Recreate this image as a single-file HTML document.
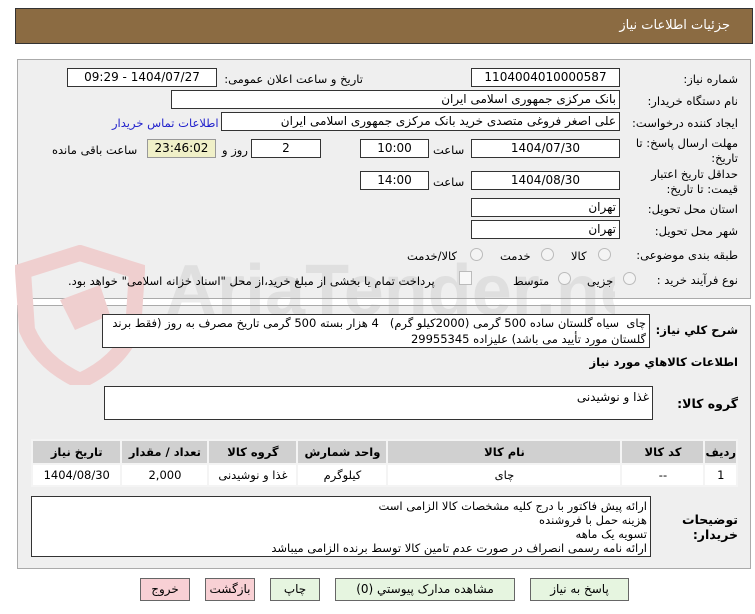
<!DOCTYPE html>
<html><head><meta charset="utf-8"><style>
*{box-sizing:border-box;margin:0;padding:0}
body{width:755px;height:614px;background:#fff;font-family:"DejaVu Sans","Liberation Sans",sans-serif;font-size:11px;color:#000;position:relative;overflow:hidden}
.a{position:absolute}
.hdr{left:15px;top:8px;width:738px;height:36px;background:#8b6b42;border:1px solid #333}
.hdr span{position:absolute;right:22px;top:9px;color:#fff;font-size:13px}
.panel{background:#efefef;border:1px solid #aaa}
.f{position:absolute;background:#fff;border:1px solid #333;height:19px;line-height:17px;font-size:12px;direction:rtl;padding-right:3px;white-space:nowrap;overflow:hidden}
.c{text-align:center;padding:0}
.l{position:absolute;direction:rtl;white-space:nowrap;font-size:11.5px}
.rad{position:absolute;width:13px;height:13px;border-radius:50%;border:1px solid #bbb;background:#f4f4f4}
table{border-collapse:collapse}
td,th{border:2px solid #f4f4f4;text-align:center;font-size:11.5px}
th{background:#d0d0d0;height:24px;font-weight:bold}
td{background:#fff;height:22px}
.b{position:absolute;top:578px;height:23px;border:1px solid #666;font-size:12px;text-align:center;line-height:21px;direction:rtl}
</style></head><body>
<div class="a hdr"><span>جزئیات اطلاعات نیاز</span></div>
<div class="a panel" style="left:17px;top:59px;width:734px;height:240px"></div>
<div class="a panel" style="left:17px;top:305px;width:734px;height:264px"></div>
<!-- watermark -->
<div class="a" style="left:15px;top:245px;width:600px;height:140px;overflow:hidden">
<svg class="a" style="left:0;top:0" width="130" height="140"><path d="M65 8 L122 26 L118 85 Q104 118 65 136 Q26 118 12 85 L8 26 Z" fill="none" stroke="#efcfcf" stroke-width="16"/><path d="M45 55 L85 40 L95 70 L60 85 Z" fill="#efcfcf"/></svg>
<div class="a" style="left:150px;top:5px;font-size:72px;font-weight:bold;color:rgba(170,170,170,0.22);font-family:'Liberation Sans',sans-serif;white-space:nowrap">AriaTender.net</div>
</div>

<div class="l" style="right:17px;top:72px">شماره نیاز:</div>
<div class="f c" style="left:471px;top:68px;width:149px">1104004010000587</div>
<div class="l" style="right:392px;top:72px">تاریخ و ساعت اعلان عمومی:</div>
<div class="f c" style="left:67px;top:68px;width:150px">1404/07/27 - 09:29</div>

<div class="l" style="right:17px;top:94px">نام دستگاه خریدار:</div>
<div class="f" style="left:171px;top:90px;width:449px">بانک مرکزی جمهوری اسلامی ایران</div>

<div class="l" style="right:17px;top:116px">ایجاد کننده درخواست:</div>
<div class="f" style="left:221px;top:112px;width:399px">علی اصغر فروغی متصدی خرید بانک مرکزی جمهوری اسلامی ایران</div>
<div class="l" style="left:112px;top:116px;color:#2222cc">اطلاعات تماس خریدار</div>

<div class="l" style="right:17px;top:136px">مهلت ارسال پاسخ: تا</div>
<div class="l" style="right:17px;top:151px">تاریخ:</div>
<div class="f c" style="left:471px;top:139px;width:149px">1404/07/30</div>
<div class="l" style="left:433px;top:143px">ساعت</div>
<div class="f c" style="left:360px;top:139px;width:69px">10:00</div>
<div class="f c" style="left:251px;top:139px;width:70px">2</div>
<div class="l" style="left:222px;top:143px">روز و</div>
<div class="f c" style="left:147px;top:139px;width:69px;background:#f0f0c8;border-color:#999">23:46:02</div>
<div class="l" style="left:52px;top:143px">ساعت باقی مانده</div>

<div class="l" style="right:17px;top:167px">حداقل تاریخ اعتبار</div>
<div class="l" style="right:17px;top:182px">قیمت: تا تاریخ:</div>
<div class="f c" style="left:471px;top:171px;width:149px">1404/08/30</div>
<div class="l" style="left:433px;top:175px">ساعت</div>
<div class="f c" style="left:360px;top:171px;width:69px">14:00</div>

<div class="l" style="right:17px;top:202px">استان محل تحویل:</div>
<div class="f" style="left:471px;top:198px;width:149px">تهران</div>
<div class="l" style="right:17px;top:224px">شهر محل تحویل:</div>
<div class="f" style="left:471px;top:220px;width:149px">تهران</div>

<div class="l" style="right:17px;top:248px">طبقه بندی موضوعی:</div>
<div class="rad" style="left:598px;top:248px"></div><div class="l" style="left:571px;top:249px">کالا</div>
<div class="rad" style="left:541px;top:248px"></div><div class="l" style="left:500px;top:249px">خدمت</div>
<div class="rad" style="left:470px;top:248px"></div><div class="l" style="left:407px;top:249px">کالا/خدمت</div>

<div class="l" style="right:17px;top:273px">نوع فرآیند خرید :</div>
<div class="rad" style="left:623px;top:272px"></div><div class="l" style="left:587px;top:274px">جزیی</div>
<div class="rad" style="left:558px;top:272px"></div><div class="l" style="left:513px;top:274px">متوسط</div>
<div class="a" style="left:459px;top:271px;width:13px;height:14px;border:1px solid #bbb;background:#f8f8f8"></div>
<div class="l" style="left:68px;top:274px">پرداخت تمام یا بخشی از مبلغ خرید،از محل "اسناد خزانه اسلامی" خواهد بود.</div>

<div class="l" style="right:17px;top:323px;font-weight:bold">شرح کلي نیاز:</div>
<div class="f" style="left:102px;top:314px;width:548px;height:34px;white-space:normal;line-height:16px;font-size:11.5px">چای&nbsp; سیاه گلستان ساده 500 گرمی (2000کیلو گرم)&nbsp;&nbsp; 4 هزار بسته 500 گرمی تاریخ مصرف به روز (فقط برند گلستان مورد تأیید می باشد) علیزاده 29955345</div>

<div class="l" style="right:17px;top:355px;font-weight:bold">اطلاعات کالاهاي مورد نياز</div>
<div class="l" style="right:17px;top:396px;font-weight:bold;font-size:12.5px">گروه کالا:</div>
<div class="f" style="left:104px;top:386px;width:549px;height:34px;padding-top:2px">غذا و نوشیدنی</div>

<table class="a" style="left:31px;top:439px;width:707px;direction:rtl;background:#f4f4f4">
<tr><th style="width:29px">ردیف</th><th style="width:83px">کد کالا</th><th style="width:234px">نام کالا</th><th style="width:90px">واحد شمارش</th><th style="width:89px">گروه کالا</th><th style="width:87px">تعداد / مقدار</th><th>تاریخ نیاز</th></tr>
<tr><td>1</td><td>--</td><td>چای</td><td>کیلوگرم</td><td>غذا و نوشیدنی</td><td>2,000</td><td>1404/08/30</td></tr>
</table>

<div class="l" style="right:17px;top:512px;font-weight:bold;font-size:12.5px">توضیحات</div>
<div class="l" style="right:17px;top:527px;font-weight:bold;font-size:12.5px">خریدار:</div>
<div class="f" style="left:31px;top:496px;width:620px;height:61px;white-space:normal;line-height:14px;font-size:11.5px;padding-top:2px">ارائه پیش فاکتور با درج کلیه مشخصات کالا الزامی است<br>هزینه حمل با فروشنده<br>تسویه یک ماهه<br>ارائه نامه رسمی انصراف در صورت عدم تامین کالا توسط برنده الزامی میباشد</div>

<div class="b" style="left:530px;width:99px;background:#e6f5e0">پاسخ به نیاز</div>
<div class="b" style="left:335px;width:180px;background:#e6f5e0">مشاهده مدارک پیوستي (0)</div>
<div class="b" style="left:270px;width:50px;background:#e6f5e0">چاپ</div>
<div class="b" style="left:205px;width:50px;background:#f8d0d4">بازگشت</div>
<div class="b" style="left:140px;width:50px;background:#f8d0d4">خروج</div>
</body></html>
